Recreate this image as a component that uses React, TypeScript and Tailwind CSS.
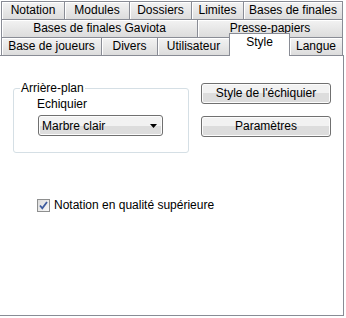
import React from 'react'

type TabDef = { label: string; w: number; active?: boolean }

const row1: TabDef[] = [
  { label: 'Notation', w: 64 },
  { label: 'Modules', w: 66 },
  { label: 'Dossiers', w: 63 },
  { label: 'Limites', w: 53 },
  { label: 'Bases de finales', w: 100 },
]
const row2: TabDef[] = [
  { label: 'Bases de finales Gaviota', w: 197 },
  { label: 'Presse-papiers', w: 146 },
]
const row3: TabDef[] = [
  { label: 'Base de joueurs', w: 101 },
  { label: 'Divers', w: 57 },
  { label: 'Utilisateur', w: 73 },
  { label: 'Style', w: 61, active: true },
  { label: 'Langue', w: 54 },
]

function Tab({ label, w, active, first }: TabDef & { first: boolean }) {
  if (active) {
    return (
      <div
        style={{ width: w }}
        className={`relative z-10 -mt-[4px] h-[23px] flex-none border border-b-0 border-[#898c95] bg-white pb-[5px] text-center leading-[17px] ${first ? '' : '-ml-px'}`}
      >
        {label}
      </div>
    )
  }
  return (
    <div
      style={{ width: w }}
      className={`h-[19px] flex-none border border-[#898c95] bg-gradient-to-b from-[#f3f3f3] to-[#dcdcdc] text-center leading-[17px] shadow-[inset_1px_1px_0_#ffffff] ${first ? '' : '-ml-px'}`}
    >
      {label}
    </div>
  )
}

function TabRow({ tabs, last }: { tabs: TabDef[]; last?: boolean }) {
  return (
    <div className={`flex items-end ${last ? '' : '-mb-px'}`}>
      {tabs.map((t, i) => (
        <Tab key={t.label} {...t} first={i === 0} />
      ))}
    </div>
  )
}

function WinButton({ children }: { children: React.ReactNode }) {
  return (
    <div className="h-[21px] w-[130px] rounded-[3px] border border-[#707070] bg-gradient-to-b from-[#f2f2f2] from-50% to-[#dddddd] to-50% text-center leading-[19px] shadow-[inset_0_0_0_1px_#fcfcfc]">
      {children}
    </div>
  )
}

export default function App() {
  return (
    <div
      className="h-[318px] w-[346px] bg-white pt-px pl-px text-[12px] text-black"
      style={{ fontFamily: '"Liberation Sans", Arial, sans-serif' }}
    >
      <TabRow tabs={row1} />
      <TabRow tabs={row2} />
      <TabRow tabs={row3} last />

      <div className="-ml-px -mt-px h-[261px] w-[344px] border border-l-0 border-[#898c95] bg-white">
        <div className="flex pt-[25px]">
          <fieldset className="ml-[13px] h-[72px] w-[176px] rounded-[3px] border border-[#d5dfe5] pl-[23px]">
            <legend className="-ml-[17px] px-[1px] leading-[14px]">Arrière-plan</legend>
            <div className="mt-[2px] leading-[14px]">Echiquier</div>
            <div className="mt-[4px] ml-px flex h-[21px] w-[125px] items-center justify-between rounded-[3px] border border-[#707070] bg-gradient-to-b from-[#f2f2f2] from-50% to-[#dddddd] to-50% pr-[5px] pl-[3px] shadow-[inset_0_0_0_1px_#fcfcfc]">
              <span>Marbre clair</span>
              <svg width="7" height="4" viewBox="0 0 7 4">
                <path d="M0 0h7L3.5 4z" fill="#000" />
              </svg>
            </div>
          </fieldset>

          <div className="mt-[2px] ml-[12px] flex flex-col gap-[12px]">
            <WinButton>Style de l'échiquier</WinButton>
            <WinButton>Paramètres</WinButton>
          </div>
        </div>

        <div className="mt-[45px] ml-[37px] flex items-center gap-[4px]">
          <div className="flex h-[13px] w-[13px] items-center justify-center border border-[#8e8f8f] bg-gradient-to-br from-[#dcdcdc] to-[#f8f8f8]">
            <svg width="9" height="9" viewBox="0 0 9 9">
              <path d="M1 4.5l2.3 2.8L8 1" stroke="#3d5b9e" strokeWidth="1.8" fill="none" />
            </svg>
          </div>
          <span className="leading-[14px]">Notation en qualité supérieure</span>
        </div>
      </div>
    </div>
  )
}
